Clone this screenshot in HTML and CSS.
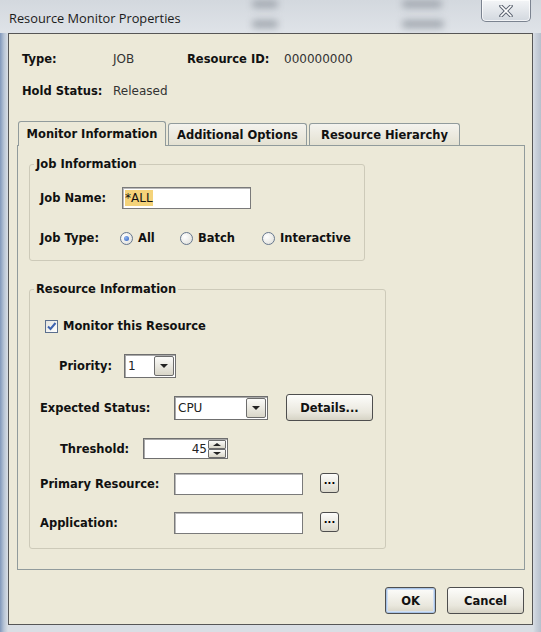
FILE: index.html
```html
<!DOCTYPE html>
<html lang="en">
<head>
  <meta charset="UTF-8">
  <title>Resource Monitor Properties</title>
  <link rel="stylesheet" href="styles.css">
</head>
<body>

  <div class="window">
    <div class="titlebar">
      <!-- blurred window behind the glass -->
      <span class="ghost" style="left:252px; top:0; width:26px;"></span>
      <span class="ghost" style="left:252px; top:20px; width:26px;"></span>
      <span class="ghost" style="left:402px; top:0; width:40px;"></span>
      <span class="ghost" style="left:402px; top:20px; width:42px;"></span>
      <span class="title">Resource Monitor Properties</span>
      <button class="close" type="button">
        <svg width="14" height="12" viewBox="0 0 14 12">
          <path d="M2 1 L12 11 M12 1 L2 11" stroke="#5a6270" stroke-width="3.6" stroke-linecap="round"/>
          <path d="M2 1 L12 11 M12 1 L2 11" stroke="#fff" stroke-width="1.6" stroke-linecap="round"/>
        </svg>
      </button>
    </div>

    <div class="client">
      <div class="info">
        <span class="lbl">Type:</span><span class="val">JOB</span>
        <span class="lbl">Resource ID:</span><span class="val">000000000</span>
        <span class="lbl">Hold Status:</span><span class="val">Released</span>
      </div>

      <div class="tabs">
        <div class="tab active" style="width:148px;">Monitor Information</div>
        <div class="tab" style="width:139px;">Additional Options</div>
        <div class="tab" style="width:151px;">Resource Hierarchy</div>
      </div>

      <div class="panel">
        <fieldset class="group group-job">
          <legend>Job Information</legend>
          <div class="row row-name">
            <label class="lbl w82">Job Name:</label>
            <div class="field w129"><span class="sel">*ALL</span></div>
          </div>
          <div class="row row-type">
            <span class="lbl w80">Job Type:</span>
            <span class="opt w60"><span class="radio on"></span><b>All</b></span>
            <span class="opt w82"><span class="radio"></span><b>Batch</b></span>
            <span class="opt"><span class="radio"></span><b>Interactive</b></span>
          </div>
        </fieldset>

        <fieldset class="group group-res">
          <legend>Resource Information</legend>
          <div class="row row-check">
            <span class="check"><svg width="11" height="11" viewBox="0 0 11 11"><path d="M2 5.5 L4.5 8 L9.5 2" fill="none" stroke="#3d63b0" stroke-width="2"/></svg></span>
            <b>Monitor this Resource</b>
          </div>
          <div class="row row-priority">
            <span class="lbl w65 indent">Priority:</span>
            <div class="combo w52"><span class="combo-text">1</span><span class="drop"></span></div>
          </div>
          <div class="row row-status">
            <span class="lbl w134">Expected Status:</span>
            <div class="combo w94"><span class="combo-text">CPU</span><span class="drop"></span></div>
            <button class="btn details" type="button">Details...</button>
          </div>
          <div class="row row-threshold">
            <span class="lbl w83 indent2">Threshold:</span>
            <div class="spinner">
              <span class="spin-val">45</span>
              <span class="spin-btns"><span class="spin up"></span><span class="spin down"></span></span>
            </div>
          </div>
          <div class="row row-lookup first">
            <span class="lbl w134">Primary Resource:</span>
            <div class="field w129"></div>
            <button class="dots" type="button">...</button>
          </div>
          <div class="row row-lookup">
            <span class="lbl w134">Application:</span>
            <div class="field w129"></div>
            <button class="dots" type="button">...</button>
          </div>
        </fieldset>
      </div>

      <div class="actions">
        <button class="btn ok" type="button">OK</button>
        <button class="btn cancel" type="button">Cancel</button>
      </div>
    </div>
  </div>

</body>
</html>
```

FILE: styles.css
```css
body {
  margin: 0;
  font-family: "DejaVu Sans", sans-serif;
  font-size: 12px;
  color: #111;
}
.window {
  width: 541px;
  height: 632px;
  display: flex;
  flex-direction: column;
  position: relative;
  overflow: hidden;
  background: linear-gradient(to right, #8198bb 0, #b8c5d6 4px, #d9dee4 8px, #d9dee4 533px, #c9d0da 536px, #b7c0cc 541px);
}
.titlebar {
  height: 33px;
  display: flex;
  align-items: flex-start;
  padding-left: 9px;
  position: relative;
  background: linear-gradient(#d3d8de, #dfe3e8);
}
.ghost {
  position: absolute;
  height: 8px;
  border-radius: 4px;
  background: #a3a9b1;
  filter: blur(3.5px);
}
.title {
  position: relative;
  margin-top: 10px;
  font-family: "Open Sans", sans-serif;
  font-size: 12.8px;
  line-height: 16px;
  color: #1b1b1b;
}
.close {
  position: relative;
  margin-left: auto;
  margin-right: 10px;
  width: 50px;
  height: 22px;
  padding: 0;
  border: 1px solid #7b8390;
  border-top: none;
  border-radius: 0 0 5px 5px;
  background: linear-gradient(#f3f5f7, #d3d8df);
  box-shadow: inset 0 0 0 1px rgba(255,255,255,0.7);
  display: flex;
  align-items: center;
  justify-content: center;
}

.client {
  flex: 1;
  margin: 0 8px 7px;
  border: 1px solid #565656;
  background: #ece9d8;
  display: flex;
  flex-direction: column;
  padding: 0 7px 0 8px;
}
.info {
  display: grid;
  grid-template-columns: 91px 74px 97px auto;
  row-gap: 16px;
  padding: 17px 0 0 5px;
  line-height: 16px;
}
.lbl {
  font-family: "DejaVu Sans", sans-serif;
  font-weight: bold;
  font-size: 11.5px;
  color: #111;
  flex: none;
}
.val {
  color: #333;
  font-size: 12px;
}

.tabs {
  display: flex;
  align-items: flex-end;
  gap: 2px;
  margin: 22px 0 0 1px;
  height: 24px;
}
.tab {
  box-sizing: border-box;
  height: 22px;
  border: 1px solid #919b9c;
  border-bottom: none;
  border-radius: 3px 3px 0 0;
  background: linear-gradient(#f4f3ee, #e4e1d2);
  font-weight: bold;
  font-size: 11.5px;
  text-align: center;
  line-height: 22px;
}
.tab.active {
  height: 25px;
  margin-bottom: -1px;
  position: relative;
  z-index: 1;
  background: #ece9d8;
  line-height: 24px;
}
.panel {
  border: 1px solid #919b9c;
  padding: 11px 0 20px 11px;
}
.group {
  box-sizing: border-box;
  margin: 0;
  min-width: 0;
  border: 1px solid #cdcab9;
  border-radius: 3px;
  padding: 0 0 0 4px;
}
.group legend {
  padding: 0 2px;
  font-weight: bold;
  font-size: 11.5px;
  line-height: 15px;
}
.group-job {
  width: 336px;
  padding-bottom: 14px;
}
.group-res {
  width: 357px;
  margin-top: 21px;
  padding-bottom: 14px;
}
.row {
  display: flex;
  align-items: center;
  padding-left: 6px;
}
.row-name { height: 22px; margin-top: 15px; }
.row-type { height: 16px; margin-top: 21px; }
.row-check { height: 16px; margin-top: 21px; padding-left: 11px; }
.row-priority { height: 24px; margin-top: 20px; }
.row-status { height: 27px; margin-top: 16px; }
.row-threshold { height: 21px; margin-top: 17px; }
.row-lookup { height: 22px; margin-top: 17px; align-items: flex-start; }
.row-lookup.first { margin-top: 14px; }
.row-lookup .lbl { align-self: center; }
.w60 { width: 60px; }
.w65 { width: 65px; }
.w80 { width: 80px; }
.w82 { width: 82px; }
.w83 { width: 83px; }
.w134 { width: 134px; }
.indent { margin-left: 19px; }
.indent2 { margin-left: 20px; }

.row b {
  font-weight: bold;
  font-size: 11.5px;
}
.field {
  box-sizing: border-box;
  height: 22px;
  background: #fff;
  border: 1px solid #7a7a7a;
  box-shadow: inset 1px 1px 0 #b9b9b9;
  padding: 2px 2px 0 2px;
  line-height: 16px;
  font-size: 12px;
}
.w129 { width: 129px; }
.sel {
  background: #f4d37a;
  padding: 1px 0;
}
.opt {
  display: flex;
  align-items: center;
  gap: 5px;
  flex: none;
}
.radio {
  box-sizing: border-box;
  width: 13px;
  height: 13px;
  border-radius: 50%;
  border: 1px solid #66778e;
  background: radial-gradient(circle at 35% 35%, #fff, #dcdcd6);
  display: flex;
  align-items: center;
  justify-content: center;
}
.radio.on::after {
  content: "";
  width: 5px;
  height: 5px;
  border-radius: 50%;
  background: radial-gradient(circle at 35% 35%, #8fb4ef, #2d5fc0);
}
.check {
  box-sizing: border-box;
  width: 13px;
  height: 13px;
  border: 1px solid #5b6f8e;
  background: linear-gradient(135deg, #e4e4de, #fff);
  margin-right: 5px;
  display: flex;
  align-items: center;
  justify-content: center;
}
.check svg { display: block; }

.combo {
  box-sizing: border-box;
  height: 24px;
  background: #fff;
  border: 1px solid #6f6f6f;
  box-shadow: inset 1px 1px 0 #a9a9a9;
  display: flex;
  align-items: center;
  padding: 0 1px 0 3px;
}
.w52 { width: 52px; }
.w94 { width: 94px; }
.combo-text {
  flex: 1;
  font-size: 12px;
  color: #222;
}
.drop, .spin {
  box-sizing: border-box;
  border: 1px solid #6d6d6d;
  border-radius: 2px;
  background: linear-gradient(#fbfbf9, #d9d6c8);
  display: flex;
  align-items: center;
  justify-content: center;
}
.drop {
  width: 20px;
  height: 20px;
}
.drop::after {
  content: "";
  border-left: 4px solid transparent;
  border-right: 4px solid transparent;
  border-top: 4px solid #222;
}

.btn {
  box-sizing: border-box;
  height: 27px;
  border: 1px solid #4e4e4e;
  border-radius: 3px;
  background: linear-gradient(#fdfdfb, #e9e7dd 70%, #d6d3c5);
  font-family: "DejaVu Sans", sans-serif;
  font-weight: bold;
  font-size: 11.5px;
  color: #111;
  padding: 0;
}
.details {
  width: 87px;
  margin-left: 18px;
}
.spinner {
  box-sizing: border-box;
  width: 85px;
  height: 21px;
  background: #fff;
  border: 1px solid #6f6f6f;
  box-shadow: inset 1px 1px 0 #a9a9a9;
  display: flex;
  align-items: center;
  padding: 0 1px 0 3px;
}
.spin-val {
  flex: 1;
  text-align: right;
  padding-right: 1px;
  font-size: 12px;
  color: #222;
}
.spin-btns {
  display: flex;
  flex-direction: column;
}
.spin {
  width: 18px;
  height: 9px;
  border-radius: 1px;
}
.spin.up::after {
  content: "";
  border-left: 4px solid transparent;
  border-right: 4px solid transparent;
  border-bottom: 3px solid #222;
}
.spin.down::after {
  content: "";
  border-left: 4px solid transparent;
  border-right: 4px solid transparent;
  border-top: 3px solid #222;
}
.dots {
  box-sizing: border-box;
  width: 19px;
  height: 20px;
  margin-left: 17px;
  padding: 0 0 4px;
  border: 1px solid #4e4e4e;
  border-radius: 3px;
  background: linear-gradient(#fdfdfb, #dcd9cc);
  font-family: "DejaVu Sans", sans-serif;
  font-weight: bold;
  font-size: 10px;
  line-height: 10px;
}

.actions {
  display: flex;
  justify-content: flex-end;
  gap: 11px;
  margin: 17px 1px 0 0;
}
.ok {
  width: 51px;
  box-shadow: inset 0 0 0 1px #a8c3e6, inset 0 0 0 2px #d1e0f4;
}
.cancel {
  width: 77px;
}
```
